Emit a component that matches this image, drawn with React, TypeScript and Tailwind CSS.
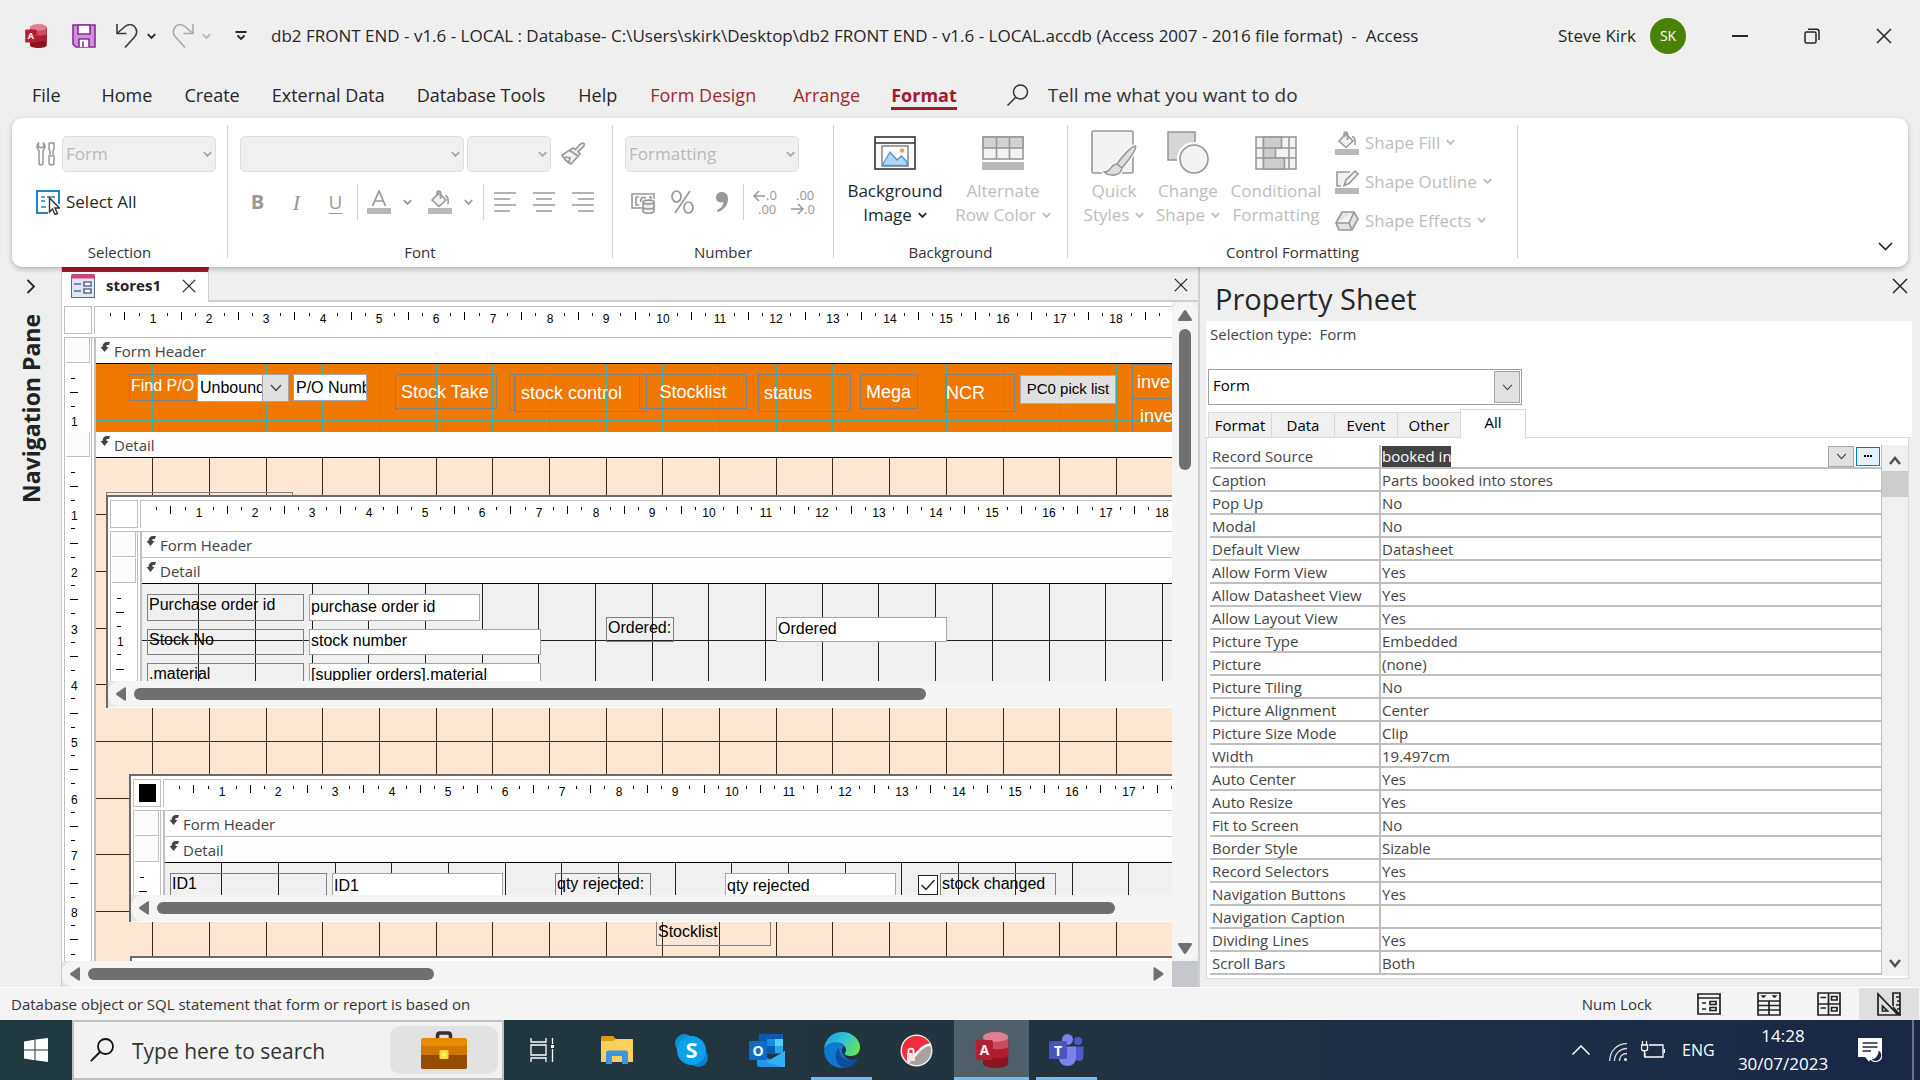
import type { ReactNode } from 'react';

const CM = 56.69;

interface ControlProps {
    id?: string;
    text: string;
    x: number;
    y: number;
    w: number;
    h: number;
}

const Chevron = ({ className = '' }: { className?: string }) => (
    <svg className={`w-[9px] h-[7px] shrink-0 ${className}`} viewBox="0 0 9 7" fill="none" stroke="currentColor" strokeWidth="1.8">
        <path d="M0.8 1.2 L4.5 5 L8.2 1.2" />
    </svg>
);

const CloseIcon = ({ className = '' }: { className?: string }) => (
    <svg className={className} viewBox="0 0 16 16" fill="none" stroke="currentColor" strokeWidth="1.5">
        <path d="M1 1 L15 15 M15 1 L1 15" />
    </svg>
);

const AccessIcon = ({ className = '' }: { className?: string }) => (
    <svg className={className} viewBox="0 0 36 40">
        <path d="M8 5 V35 C8 38 14 40 22 40 S36 38 36 35 V5 Z" fill="#8a1420" />
        <path d="M8 5 V27 C12 30 32 30 36 27 V5 Z" fill="#b01c2c" />
        <path d="M8 5 V17 C12 20 32 20 36 17 V5 Z" fill="#cb4c5c" />
        <ellipse cx="22" cy="5.5" rx="14" ry="5.5" fill="#e08090" />
        <rect x="0" y="9" width="19" height="22" rx="2" fill="#b01f32" />
        <text x="9.500" y="25.500" textAnchor="middle" fontSize="15" fontWeight="bold" fill="#fff">A</text>
    </svg>
);

const TitleBar = () => (
    <header className="h-[60px] shrink-0 flex items-center pl-6 pr-7 mt-[6px] mb-[6px] text-[17px] text-[#262626]">
        <AccessIcon className="w-6 h-6" />
        <button aria-label="Save" className="ml-6">
            <svg className="w-6 h-6" viewBox="0 0 24 24" stroke="#8a2b9c" strokeWidth="1.6">
                <path d="M1 1 H23 V23 H4 L1 20 Z" fill="#cf8fdc" />
                <path d="M6 1 H18 V10 H6 Z" fill="#fff" />
                <path d="M7 23 V15 H17 V23" fill="#fff" />
                <path d="M11 17.500 V23" fill="none" />
            </svg>
        </button>
        <button aria-label="Undo" className="ml-5 flex items-center gap-[9px]">
            <svg className="w-[22px] h-6" viewBox="0 0 22 24" fill="none" stroke="#3b3b3b" strokeWidth="1.6">
                <path d="M1 0 V9.500 H10.500 M1.500 9 L9 2.500 C12 0 16 0 18.500 2.500 C21.500 6 21.500 9.500 18.500 13 L9 23.500" />
            </svg>
            <Chevron />
        </button>
        <button aria-label="Redo" disabled className="ml-4 flex items-center gap-2 text-[#b5b5b5]">
            <svg className="w-[22px] h-6" viewBox="0 0 22 24" fill="none" stroke="#a9a9a9" strokeWidth="1.6">
                <path d="M21 0 V9.500 H11.500 M20.500 9 L13 2.500 C10 0 6 0 3.500 2.500 C0.500 6 0.500 9.500 3.500 13 L13 23.500" />
            </svg>
            <Chevron />
        </button>
        <button aria-label="Customize Quick Access Toolbar" className="ml-6">
            <svg className="w-3 h-[10px]" viewBox="0 0 12 10" fill="none" stroke="#262626" strokeWidth="1.8">
                <path d="M0.500 1 H11.500 M2.500 4.500 L6 8 L9.500 4.500" />
            </svg>
        </button>
        <h1 className="ml-6 whitespace-pre">db2 FRONT END - v1.6 - LOCAL : Database- C:\Users\skirk\Desktop\db2 FRONT END - v1.6 - LOCAL.accdb (Access 2007 - 2016 file format)  -  Access</h1>
        <div className="ml-auto flex items-center">
            <span>Steve Kirk</span>
            <span className="ml-[14px] w-9 h-9 rounded-full bg-[#498205] text-white text-sm flex items-center justify-center">SK</span>
            <button aria-label="Minimize" className="ml-[46px] w-4 h-[2px] bg-[#262626]"></button>
            <button aria-label="Restore" className="ml-14">
                <svg className="w-4 h-4" viewBox="0 0 16 16" fill="none" stroke="#262626" strokeWidth="1.5">
                    <rect x="1" y="4" width="11" height="11" rx="1.500" />
                    <path d="M4 1.200 H12.500 C14 1.200 15 2.200 15 3.700 V12" />
                </svg>
            </button>
            <button aria-label="Close" className="ml-14">
                <CloseIcon className="w-4 h-4" />
            </button>
        </div>
    </header>
);

const MenuBar = () => (
    <nav className="h-[46px] shrink-0 flex items-center pl-[17px] text-[18px] text-[#262626]">
        <a href="#file" className="px-[15px] mr-[10px]">File</a>
        {["Home", "Create", "External Data", "Database Tools"].map((item) => (
            <a href={`#${item}`} key={item} className="px-4">{item}</a>
        ))}
        <a href="#help" className="px-[17px]">Help</a>
        <a href="#design" className="pl-4 pr-5 text-[#a4262c]">Form Design</a>
        <a href="#arrange" className="px-[17px] text-[#a4262c]">Arrange</a>
        <a href="#format" className="mx-[14px] font-bold text-[#a01b2f] border-b-[3px] border-[#a01b2f] h-[30px] leading-[30px]">Format</a>
        <label htmlFor="tell" className="ml-9">
            <svg className="w-[22px] h-[22px]" viewBox="0 0 22 22" fill="none" stroke="#333" strokeWidth="1.500">
                <title>Search</title>
                <circle cx="13.500" cy="8" r="7" />
                <path d="M8.500 13.500 L0.500 21.500" />
            </svg>
        </label>
        <input id="tell" className="ml-[19px] w-72 bg-transparent text-[19px] placeholder:text-[#333] outline-none" placeholder="Tell me what you want to do" />
    </nav>
);

const Combo = ({ label, value = '', width }: { label: string; value?: string; width: string }) => (
    <div className={`relative h-9 ${width}`}>
        <select aria-label={label} disabled className="appearance-none w-full h-full rounded-[5px] border border-[#dedede] bg-[#f0f0f0] text-[#b9b9b9] text-[17px] pl-[3px] opacity-100">
            <option>{value}</option>
        </select>
        <Chevron className="absolute right-1 top-[15px] text-[#a8a8a8]" />
    </div>
);

const Group = ({ title, width, children }: { title: string; width: string; children: ReactNode }) => (
    <section className={`flex shrink-0 ${width}`}>
        <div className="flex-1 flex flex-col justify-between pb-1">
            {children}
            <h2 className="text-center text-[15px] leading-[22px] text-[#333]">{title}</h2>
        </div>
        <div className="w-px h-[133px] mt-[7px] bg-[#d0d0d0]"></div>
    </section>
);

const Divider = () => <div className="w-px h-9 bg-[#d0d0d0]"></div>;

const Align = ({ label, lines }: { label: string; lines: string }) => (
    <button disabled aria-label={label}>
        <svg className="w-[22px] h-[22px]" viewBox="0 0 22 22" stroke="#999" strokeWidth="1.600"><path d={lines} /></svg>
    </button>
);

const BucketIcon = ({ className }: { className: string }) => (
    <svg className={className} viewBox="0 0 24 24" fill="none" stroke="#999" strokeWidth="1.600">
        <path d="M4 10 L11 3 L18 10 L11 16.500 Z" fill="#f1f1f1" />
        <path d="M9 6 V2.500 C9 0.500 12.500 0.500 12.500 2.500 V9 M17 5.500 C20.500 6 20.500 10 20 14" />
        <rect x="0" y="18" width="24" height="6" fill="#b8b8b8" stroke="none" />
    </svg>
);

const Big = ({ top, bottom, icon, arrow = true, off = true, width }: { top: string; bottom: string; icon: ReactNode; arrow?: boolean; off?: boolean; width: string }) => (
    <button disabled={off} className={`flex flex-col items-center text-[17px] leading-6 ${width} ${off ? "text-[#bdbdbd]" : "text-[#262626]"}`}>
        <span className="h-[50px] flex items-center mb-px">{icon}</span>
        <span>{top}</span>
        <span className="flex items-center gap-[6px] whitespace-nowrap">{bottom}{arrow ? <Chevron /> : <></>}</span>
    </button>
);

const Ribbon = () => (
    <div className="mx-3 h-[149px] shrink-0 flex bg-white rounded-[10px] shadow-[0_2px_5px_rgba(0,0,0,0.25)] relative z-10">
        <Group title="Selection" width="w-[216px]">
            <div className="pt-[18px] pl-6">
                <div className="flex items-center gap-[6px]">
                    <svg className="w-5 h-6" viewBox="0 0 20 24" fill="none" stroke="#999" strokeWidth="1.500">
                        <path d="M2.500 1 C0.500 3 0.500 7 3 8.500 V21 C3 23.500 7 23.500 7 21 V8.500 C9.500 7 9.500 3 7.500 1 V5.500 H2.500 Z" />
                        <path d="M13 1 H18 V7 L17 9 V13 M13 1 V7 L14 9 V13 M12 14 H19 M13 15 V21 C13 23.500 18 23.500 18 21 V15" />
                    </svg>
                    <Combo label="Object" value="Form" width="w-[154px]" />
                </div>
                <button className="mt-3 h-9 flex items-center gap-[6px] text-[17px] text-[#262626]">
                    <svg className="w-6 h-[26px]" viewBox="0 0 24 26" fill="none">
                        <path d="M23 15 V2 H1 V24 H12" stroke="#1b84c9" strokeWidth="2" />
                        <path d="M5 8 H9 M11 8 H19 M5 12 H9 M5 18 H10" stroke="#1b84c9" strokeWidth="1.600" />
                        <path d="M13.500 9 V23 L16.500 20 L19 25.500 L21.500 24.500 L19 19 H23.500 Z" fill="#fff" stroke="#333" strokeWidth="1.400" />
                    </svg>
                    Select All
                </button>
            </div>
        </Group>
        <Group title="Font" width="w-[385px]">
            <div className="pt-[18px] pl-3">
                <div className="flex items-center">
                    <Combo label="Font" width="w-[224px]" />
                    <Combo label="Font size" width="w-[84px] ml-[3px]" />
                    <button disabled aria-label="Format Painter" className="ml-[10px]">
                        <svg className="w-6 h-6" viewBox="0 0 24 24" fill="none" stroke="#999" strokeWidth="1.700">
                            <path d="M22 1 C24 2 23.500 4 22 5 L17 9.500 L19 12 L10 22 C6 20 3 17 1 13 L12 6 L14.500 7.500 L19.500 2 Z M9 8.500 L17 14 M4 15 L9 16 L8 20" fill="#f3f3f3" />
                        </svg>
                    </button>
                </div>
                <div className="mt-3 h-9 flex items-center text-[#999]">
                    <button disabled aria-label="Bold" className="w-[35px] text-[20px] font-bold">B</button>
                    <button disabled aria-label="Italic" className="w-[43px] font-['Liberation_Serif'] text-[22px] italic">I</button>
                    <button disabled aria-label="Underline" className="w-[35px] text-[19px] underline underline-offset-4">U</button>
                    <div className="ml-1"><Divider /></div>
                    <button disabled aria-label="Font Color" className="ml-[9px] flex items-center gap-3">
                        <svg className="w-6 h-6" viewBox="0 0 24 24" fill="none" stroke="#999" strokeWidth="1.700">
                            <path d="M5.500 16 L12 1 L18.500 16 M8 11 H16" />
                            <rect x="0" y="18" width="24" height="6" fill="#b8b8b8" stroke="none" />
                        </svg>
                        <Chevron />
                    </button>
                    <button disabled aria-label="Background Color" className="ml-4 flex items-center gap-3">
                        <BucketIcon className="w-6 h-6" />
                        <Chevron />
                    </button>
                    <div className="ml-[10px]"><Divider /></div>
                    <div className="ml-[10px] flex gap-[17px]">
                        <Align label="Align Left" lines="M0 2 H22 M0 8 H16 M0 14 H22 M0 20 H16" />
                        <Align label="Center" lines="M0 2 H22 M3 8 H19 M0 14 H22 M3 20 H19" />
                        <Align label="Align Right" lines="M0 2 H22 M6 8 H22 M0 14 H22 M6 20 H22" />
                    </div>
                </div>
            </div>
        </Group>
        <Group title="Number" width="w-[221px]">
            <div className="pt-[18px] pl-3">
                <Combo label="Format" value="Formatting" width="w-[174px]" />
                <div className="mt-3 h-9 flex items-center text-[#999] pl-[6px]">
                    <button disabled aria-label="Currency">
                        <svg className="w-6 h-6" viewBox="0 0 24 24" fill="none" stroke="#999" strokeWidth="1.600">
                            <path d="M23 9 V4 H1 V18 H11 M8 7 H5 V15 H8 M15 8 C11 6 9 9 10 12 M18 7 H20 V9" />
                            <path d="M12 12 V21 C12 24 23 24 23 21 V12 C23 9.500 12 9.500 12 12 C12 14.500 23 14.500 23 12 M12 17 C12 19.500 23 19.500 23 17" fill="#eee" />
                        </svg>
                    </button>
                    <button disabled aria-label="Percent" className="ml-4">
                        <svg className="w-[23px] h-6" viewBox="0 0 23 24" fill="none" stroke="#999" strokeWidth="1.700">
                            <ellipse cx="5.500" cy="6.500" rx="4.500" ry="5.500" />
                            <ellipse cx="17.500" cy="17.500" rx="4.500" ry="5.500" />
                            <path d="M19 1 L4 23" />
                        </svg>
                    </button>
                    <button disabled aria-label="Comma" className="ml-[22px]">
                        <svg className="w-3 h-5" viewBox="0 0 12 20" fill="#999"><path d="M6 0 C10 0 12 3 12 7 C12 13 8 18 2 20 L1 18 C5 16 7 14 7.500 10 C3 11.500 0 9 0 5.500 C0 2 3 0 6 0 Z" /></svg>
                    </button>
                    <div className="ml-[15px]"><Divider /></div>
                    <button disabled aria-label="Increase Decimals" className="ml-[9px]">
                        <svg className="w-6 h-7 overflow-visible" viewBox="0 0 24 28" fill="none" stroke="#999" strokeWidth="1.500">
                            <path d="M12 8 H1 M6 3 L1 8 L6 13" />
                            <text x="13" y="12" fontSize="13" fill="#999" stroke="none">.0</text>
                            <text x="5" y="26" fontSize="13" fill="#999" stroke="none">.00</text>
                        </svg>
                    </button>
                    <button disabled aria-label="Decrease Decimals" className="ml-[14px]">
                        <svg className="w-6 h-7 overflow-visible" viewBox="0 0 24 28" fill="none" stroke="#999" strokeWidth="1.500">
                            <path d="M0 21 H12 M7 16 L12 21 L7 26" />
                            <text x="5" y="12" fontSize="13" fill="#999" stroke="none">.00</text>
                            <text x="13" y="26" fontSize="13" fill="#999" stroke="none">.0</text>
                        </svg>
                    </button>
                </div>
            </div>
        </Group>
        <Group title="Background" width="w-[234px]">
            <div className="pt-[10px] pl-[11px] flex">
                <Big top="Background" bottom="Image" off={false} width="w-[100px]" icon={
                    <svg className="w-[42px] h-[34px]" viewBox="0 0 42 34" fill="none">
                        <rect x="1" y="1" width="40" height="32" fill="#fafafa" stroke="#333" strokeWidth="1.600" />
                        <path d="M1 7 H41" stroke="#333" strokeWidth="1.600" />
                        <rect x="8" y="10" width="26" height="20" fill="#fff" stroke="#8a8a8a" strokeWidth="1.600" />
                        <path d="M9 28 L16 16 L23 24 L27.500 20 L33 26 V29.500 H9 Z" fill="#b3d6f2" stroke="#4a97d0" strokeWidth="1.300" />
                        <circle cx="28" cy="14.500" r="2.200" fill="#f0a050" />
                    </svg>
                } />
                <Big top="Alternate" bottom="Row Color" width="w-[116px]" icon={
                    <svg className="w-[42px] h-[34px]" viewBox="0 0 42 34" fill="none" stroke="#999" strokeWidth="1.600">
                        <rect x="1" y="1" width="40" height="22" fill="#f3f3f3" />
                        <rect x="1" y="1" width="40" height="11" fill="#d2d2d2" />
                        <path d="M14.500 1 V23 M27.500 1 V23" />
                        <rect x="0" y="26" width="42" height="8" fill="#b9b9b9" stroke="none" />
                    </svg>
                } />
            </div>
        </Group>
        <Group title="Control Formatting" width="w-[450px]">
            <div className="pt-[10px] pl-[9px] flex">
                <Big top="Quick" bottom="Styles" width="w-[74px]" icon={
                    <svg className="w-[46px] h-[46px]" viewBox="0 0 46 46" fill="none" stroke="#999" strokeWidth="1.600">
                        <rect x="1" y="1" width="41" height="42" rx="1.500" fill="#f3f3f3" />
                        <path d="M44.500 16 C41 15 30 28 26 34 L31 38 C36 32 46 20 44.500 16 Z M26 34 C19 34 21 42 13 42 C19 47 30 46 31 38" fill="#e6e6e6" stroke="#fff" strokeWidth="4" />
                        <path d="M44.500 16 C41 15 30 28 26 34 L31 38 C36 32 46 20 44.500 16 Z M26 34 C19 34 21 42 13 42 C19 47 30 46 31 38" fill="#dedede" />
                    </svg>
                } />
                <Big top="Change" bottom="Shape" width="w-[74px]" icon={
                    <svg className="w-[42px] h-[44px]" viewBox="0 0 42 44" fill="#f3f3f3" stroke="#999" strokeWidth="1.600">
                        <rect x="1" y="1" width="27" height="28" fill="#d6d6d6" />
                        <circle cx="27" cy="28" r="16" stroke="#fff" strokeWidth="2" />
                        <circle cx="27" cy="28" r="14" />
                    </svg>
                } />
                <Big top="Conditional" bottom="Formatting" arrow={false} width="w-[102px]" icon={
                    <svg className="w-[42px] h-[34px]" viewBox="0 0 42 34" fill="#f3f3f3" stroke="#999" strokeWidth="1.600">
                        <rect x="1" y="1" width="40" height="32" />
                        <path d="M8.500 1 V33 M34 1 V33 M1 12 H41 M1 22 H41" />
                        <rect x="8.500" y="1" width="18" height="11" fill="#ccc" />
                        <rect x="8.500" y="12" width="12" height="10" fill="#ccc" />
                        <rect x="8.500" y="22" width="21" height="11" fill="#ccc" />
                    </svg>
                } />
                <div className="ml-2 -mt-[5px] flex flex-col text-[17px] text-[#bdbdbd]">
                    <button disabled className="flex items-center gap-[6px] h-[39px]"><BucketIcon className="w-6 h-6" />Shape Fill<Chevron /></button>
                    <button disabled className="flex items-center gap-[6px] h-[39px]">
                        <svg className="w-6 h-6" viewBox="0 0 24 24" fill="none" stroke="#999" strokeWidth="1.600">
                            <path d="M15 2 H2 V16 H6 M9 15.500 L11 10 L20 1 L23 4 L14 13.500 Z" fill="#f0f0f0" />
                            <rect x="0" y="18" width="24" height="6" fill="#b8b8b8" stroke="none" />
                        </svg>
                        Shape Outline<Chevron />
                    </button>
                    <button disabled className="flex items-center gap-[6px] h-[39px]">
                        <svg className="w-6 h-5" viewBox="0 0 24 20" fill="#e3e3e3" stroke="#999" strokeWidth="1.700">
                            <path d="M1 12 L7 1 H19 L23 8 L17 19 H4 Z" />
                            <path d="M1 12 H14 L19 1 M14 12 L17 19" fill="#f6f6f6" />
                        </svg>
                        Shape Effects<Chevron />
                    </button>
                </div>
            </div>
        </Group>
        <button aria-label="Collapse Ribbon" className="ml-auto self-end mr-[15px] mb-4">
            <svg className="w-[15px] h-[9px]" viewBox="0 0 15 9" fill="none" stroke="#262626" strokeWidth="1.700"><path d="M1 1 L7.500 7.500 L14 1" /></svg>
        </button>
    </div>
);

// four marks to the centimetre, the fourth one carries the number
const HRuler = ({ marks }: { marks: number }) => (
    <div className="relative flex-1 h-[28px] overflow-hidden border-t border-l border-[#c0c0c0] font-['Liberation_Sans',Arial,sans-serif] text-xs text-black">
        {Array.from({ length: marks }, (_, i) => i + 1).map((q) => (
            <span key={q} className="absolute top-[4px] w-6 -ml-3 flex justify-center" style={{ left: Math.round(q * CM / 4) + 1 }}>
                {q % 4 === 0 ? <span className="leading-4">{q / 4}</span> : <span className={q % 2 === 0 ? "w-px h-2 mt-px bg-black" : "w-px h-[3px] mt-[2px] bg-black"}></span>}
            </span>
        ))}
    </div>
);

const VRuler = ({ marks }: { marks: number }) => (
    <div className="relative h-full font-['Liberation_Sans',Arial,sans-serif] text-xs text-black">
        {Array.from({ length: marks }, (_, i) => i + 1).map((q) => (
            <span key={q} className="absolute left-[5px] h-4 -mt-2 flex items-center" style={{ top: Math.floor(q * CM / 4) }}>
                {q % 4 === 0 ? <span className="leading-4 pt-1 pl-px">{q / 4}</span> : <span className={q % 2 === 0 ? "w-2 h-px bg-black" : "w-1 h-px ml-px bg-black"}></span>}
            </span>
        ))}
    </div>
);

const Grid = ({ color }: { color: string }) => (
    <svg className="absolute inset-0 w-full h-full" stroke={color} shapeRendering="crispEdges">
        {Array.from({ length: 24 }, (_, i) => Math.floor((i + 1) * CM)).map((p) => (
            <g key={p}>
                <line x1={p} x2={p} y1="0" y2="100%" />
                <line x1="0" x2="100%" y1={p} y2={p} />
            </g>
        ))}
    </svg>
);

const Section = ({ title, size, fill = "", grid = "", marks = 0, children }: { title: string; size: string; fill?: string; grid?: string; marks?: number; children?: ReactNode }) => (
    <div className={`flex flex-col min-h-0 ${size}`}>
        <div className="flex h-[26px] shrink-0">
            <div className="w-7 border-x border-[#c0c0c0] bg-white pl-px pb-px pr-px">
                <div className="h-full border-r border-b border-[#c0c0c0] bg-[#fcfcfc]"></div>
            </div>
            <div className="w-[2px] bg-white"></div>
            <div className="w-[2px] bg-[#c0c0c0]"></div>
            <div className={`flex-1 flex items-center gap-1 pl-1 bg-[#fdfdfd] border-b font-['Open_Sans','Noto_Sans',sans-serif] text-[15px] leading-5 text-[#444] ${children ? "border-black" : "border-[#c0c0c0]"}`}>
                <svg className="w-[10px] h-[10px] mb-2" viewBox="0 0 10 10" fill="#444"><path d="M10 0 L9 3 L6.500 3 V5 H8.500 L4.500 10 L0.500 5 H2.500 C2.500 2 4 0 7 0 Z" /></svg>
                {title}
            </div>
        </div>
        {children ? (
            <div className="flex flex-1 min-h-0">
                <div className="w-7 border-x border-[#c0c0c0] bg-white overflow-hidden"><VRuler marks={marks} /></div>
                <div className="w-[2px] bg-white"></div>
                <div className="w-[2px] bg-[#c0c0c0]"></div>
                <div className={`relative flex-1 overflow-hidden ${fill}`}>
                    <Grid color={grid} />
                    {children}
                </div>
            </div>
        ) : (
            <></>
        )}
    </div>
);

const Surface = ({ marks, selected = false, children }: { marks: number; selected?: boolean; children: ReactNode }) => (
    <div className="flex-1 min-h-0 flex flex-col bg-white">
        <div className="flex h-[31px] shrink-0">
            <button aria-label="Select form" className="w-7 h-7 mr-[2px] border border-[#c0c0c0] flex items-center justify-center">
                {selected ? <span className="w-[17px] h-[18px] bg-black"></span> : <></>}
            </button>
            <HRuler marks={marks} />
        </div>
        <div className="h-px shrink-0 bg-[#c0c0c0]"></div>
        {children}
    </div>
);

const HScroll = ({ thumb, end = false }: { thumb: string; end?: boolean }) => (
    <div className="h-[26px] shrink-0 flex items-center bg-[#f5f5f5] rounded-l-[12px] pl-2 pr-2">
        <svg className="w-[10px] h-[14px] shrink-0" viewBox="0 0 10 14" fill="#707070"><path d="M8.500 0.500 C9.500 0 10 0.500 10 1.500 V12.500 C10 13.500 9.500 14 8.500 13.500 L0.500 8 C0 7.500 0 6.500 0.500 6 Z" /></svg>
        <div className={`ml-2 h-3 rounded-full bg-[#707070] shrink-0 ${thumb}`}></div>
        {end ? (
            <svg className="ml-auto w-[11px] h-[14px]" viewBox="0 0 10 14" fill="#707070"><path d="M1.500 0.500 C0.500 0 0 0.500 0 1.500 V12.500 C0 13.500 0.500 14 1.500 13.500 L9.500 8 C10 7.500 10 6.500 9.500 6 Z" /></svg>
        ) : (
            <></>
        )}
    </div>
);

const FieldLabel = ({ id, text, x, y, w, h }: ControlProps) => (
    <label htmlFor={id} className="absolute border border-[#808080] pl-px text-base leading-5 text-black whitespace-nowrap" style={{ left: x, top: y, width: w, height: h }}>{text}</label>
);

const TextBox = ({ id, text, x, y, w, h }: ControlProps) => (
    <input id={id} aria-label={text} defaultValue={text} className="absolute border border-[#a6a6a6] bg-white pl-px pb-[2px] text-base text-black" style={{ left: x, top: y, width: w, height: h }} />
);

const HeaderLabel = ({ text, x, y, w, h }: ControlProps) => (
    <a href={`#${text}`} className="absolute border border-[#808080] pl-[5px] flex items-center text-lg text-white whitespace-nowrap" style={{ left: x, top: y, width: w, height: h }}>{text}</a>
);

const headerLabels = [
    { text: "Stock Take", x: 299, y: 10, w: 102, h: 35 },
    { text: "stock control", x: 419, y: 10, w: 132, h: 38 },
    { text: "Mega", x: 764, y: 10, w: 58, h: 35 },
    { text: "status", x: 662, y: 10, w: 93, h: 38 },
];

const orderLabels = [
    { id: "po", text: "Purchase order id", x: 5, y: 10, w: 157, h: 27 },
    { id: "stock", text: "Stock No", x: 5, y: 45, w: 157, h: 26 },
    { id: "material", text: ".material", x: 5, y: 79, w: 157, h: 26 },
    { id: "ordered", text: "Ordered:", x: 464, y: 33, w: 68, h: 25 },
];

const orderBoxes = [
    { id: "po", text: "purchase order id", x: 167, y: 10, w: 171, h: 27 },
    { id: "stock", text: "stock number", x: 167, y: 45, w: 232, h: 26 },
    { id: "material", text: "[supplier orders].material", x: 167, y: 79, w: 232, h: 26 },
    { id: "ordered", text: "Ordered", x: 634, y: 33, w: 171, h: 25 },
];

const Subform = ({ place, selected, thumb, across, down, children }: { place: string; selected?: boolean; thumb: string; across: number; down: number; children: ReactNode }) => (
    <div className={`absolute right-0 flex flex-col bg-white border-l-2 border-t-2 border-[#6b6b6b] ${place}`}>
        <div className="flex-1 min-h-0 flex flex-col pl-[2px] pt-[3px]">
            <Surface marks={across} selected={selected}>
                <Section title="Form Header" size="shrink-0" />
                <Section title="Detail" size="flex-1" fill="bg-[#f0f0f0]" grid="#222" marks={down}>{children}</Section>
            </Surface>
        </div>
        <div className="bg-[#e6e6e6]"><HScroll thumb={thumb} /></div>
        <div className="h-px bg-white"></div>
    </div>
);

const Designer = () => (
    <main className="flex-1 min-w-0 flex flex-col border-l border-[#cfcfcf]">
        <div className="h-[35px] shrink-0 flex">
            <div className="w-[147px] flex items-center bg-white border-t-[5px] border-r border-t-[#a4172b] border-r-[#cfcfcf] pl-[9px] pb-[3px]">
                <svg className="w-6 h-6" viewBox="0 0 24 24" fill="none">
                    <rect x="0.500" y="2" width="23" height="21.500" fill="#dfe7f5" stroke="#5a6b8c" />
                    <rect x="0.500" y="0" width="23" height="4.500" fill="#c9457f" />
                    <path d="M3 10 H10 M3 17 H10" stroke="#5a6b8c" strokeWidth="1.600" />
                    <path d="M13 8 H20 V12 H13 Z M13 15 H20 V19 H13 Z" fill="#fff" stroke="#5a6b8c" strokeWidth="1.600" />
                </svg>
                <span className="ml-[11px] text-[15px] font-bold text-[#222]">stores1</span>
                <button aria-label="Close stores1" className="ml-auto mr-3 text-[#262626]"><CloseIcon className="w-[14px] h-[14px]" /></button>
            </div>
            <div className="flex-1 flex items-center justify-end border-b-2 border-[#cfcfcf] pr-[10px]">
                <button aria-label="Close document" className="text-[#262626] mt-[2px]"><CloseIcon className="w-[14px] h-[14px]" /></button>
            </div>
        </div>
        <div className="flex-1 min-h-0 flex">
            <div className="flex-1 min-w-0 flex flex-col font-['Liberation_Sans',Arial,sans-serif]">
                <div className="flex-1 min-h-0 flex flex-col pl-[2px] pt-1 bg-white">
                    <Surface marks={75}>
                        <Section title="Form Header" size="h-[94px] shrink-0" fill="bg-[#f07800]" grid="#38b0a0" marks={4}>
                            <label htmlFor="find" className="absolute left-[33px] top-[10px] w-[69px] h-[27px] border border-[#808080] pl-px text-base leading-[22px] text-white">Find P/O</label>
                            <div className="absolute left-[101px] top-[10px] w-[92px] h-7">
                                <select id="find" className="appearance-none w-full h-full border border-[#a6a6a6] bg-white pl-[2px] text-base text-black">
                                    <option>Unbound</option>
                                </select>
                                <span className="absolute right-px top-px bottom-px w-[26px] bg-[#e0e0e0] border-l border-[#a6a6a6] flex items-center justify-center text-[#444]">
                                    <svg className="w-3 h-2" viewBox="0 0 12 8" fill="none" stroke="currentColor" strokeWidth="1.200"><path d="M1 1 L6 6.500 L11 1" /></svg>
                                </span>
                            </div>
                            <input aria-label="P/O Number" defaultValue="P/O Number" className="absolute left-[197px] top-[10px] w-[74px] h-[27px] border border-[#a6a6a6] bg-white pl-[2px] text-base text-black" />
                            <div className="absolute left-[413px] top-[10px] w-[6px] h-[37px] border border-[#808080]"></div>
                            {headerLabels.map((c) => <HeaderLabel key={c.text} {...c} />)}
                            <a href="#stocklist" className="absolute left-[543px] top-[10px] w-[108px] h-[35px] border border-[#808080] flex items-center justify-center text-lg text-white">Stocklist</a>
                            <a href="#ncr" className="absolute left-[849px] top-[10px] w-[70px] h-[38px] border border-[#808080] flex items-center text-lg text-white">NCR</a>
                            <button className="absolute left-[924px] top-[11px] w-[96px] h-[29px] border border-[#b0b0b0] bg-[#e0e0e0] text-[15px] text-black whitespace-nowrap">PC0 pick list</button>
                            <a href="#inve-top" className="absolute left-[1036px] right-0 top-0 h-[35px] border border-r-0 border-[#808080] bg-[#f07800] pl-1 flex items-center text-lg text-white">inve</a>
                            <a href="#inve-bottom" className="absolute left-[1036px] right-0 top-[35px] h-[33px] border-l border-[#808080] pl-[7px] flex items-center text-lg text-white">inve</a>
                        </Section>
                        <Section title="Detail" size="flex-1" fill="bg-[#fce6d4]" grid="#3a2a1c" marks={35}>
                            <div className="absolute left-[10px] top-[34px] w-[187px] h-6 border border-[#808080]"></div>
                            <Subform place="left-[10px] top-[37px] h-[213px]" thumb="w-[792px]" across={72} down={6}>
                                {orderLabels.map((c) => <FieldLabel key={c.text} {...c} />)}
                                {orderBoxes.map((c) => <TextBox key={c.text} {...c} />)}
                            </Subform>
                            <Subform place="left-[33px] top-[316px] h-[148px]" selected thumb="w-[958px]" across={71} down={2}>
                                <FieldLabel id="id1" text="ID1" x={5} y={10} w={157} h={27} />
                                <TextBox id="id1" text="ID1" x={167} y={10} w={171} h={27} />
                                <FieldLabel id="qty" text="qty rejected:" x={390} y={10} w={96} h={27} />
                                <TextBox id="qty" text="qty rejected" x={560} y={10} w={171} h={27} />
                                <input id="changed" type="checkbox" defaultChecked className="absolute left-[753px] top-[12px] w-5 h-5 appearance-none border border-[#222] bg-white" />
                                <svg className="absolute left-[756px] top-[16px] w-[14px] h-3 pointer-events-none" viewBox="0 0 14 12" fill="none" stroke="#222" strokeWidth="1.500"><path d="M0.500 6 L5 10.500 L13.500 1" /></svg>
                                <FieldLabel id="changed" text="stock changed" x={775} y={10} w={116} h={27} />
                            </Subform>
                            <div className="absolute left-[560px] top-[464px] w-[115px] h-6 border border-t-0 border-[#808080] pl-px text-base leading-5 text-black">Stocklist</div>
                            <div className="absolute left-[34px] right-0 top-[498px] h-10 border-l-2 border-t-2 border-[#6b6b6b] bg-white pl-[2px] pt-[3px]">
                                <div className="h-full border border-[#c0c0c0]"></div>
                            </div>
                        </Section>
                    </Surface>
                </div>
                <div className="bg-[#e6e6e6]"><HScroll thumb="w-[346px]" end /></div>
            </div>
            <div className="w-[26px] shrink-0 flex flex-col">
                <div className="flex-1 bg-[#f5f5f5] rounded-[12px] flex flex-col items-center pt-2 pb-[7px]">
                    <svg className="w-[14px] h-[11px]" viewBox="0 0 14 11" fill="#707070"><path d="M6 0.500 C6.500 0 7.500 0 8 0.500 L13.700 9 C14.200 10 14 11 12.500 11 H1.500 C0 11 -0.200 10 0.300 9 Z" /></svg>
                    <div className="mt-2 w-3 h-[141px] rounded-full bg-[#707070]"></div>
                    <svg className="mt-auto w-[14px] h-[11px] rotate-180" viewBox="0 0 14 11" fill="#707070"><path d="M6 0.500 C6.500 0 7.500 0 8 0.500 L13.700 9 C14.200 10 14 11 12.500 11 H1.500 C0 11 -0.200 10 0.300 9 Z" /></svg>
                </div>
                <div className="h-[26px] bg-[#c5c7cc]"></div>
            </div>
        </div>
    </main>
);

const properties = [
    ["Caption", "Parts booked into stores"],
    ["Pop Up", "No"],
    ["Modal", "No"],
    ["Default View", "Datasheet"],
    ["Allow Form View", "Yes"],
    ["Allow Datasheet View", "Yes"],
    ["Allow Layout View", "Yes"],
    ["Picture Type", "Embedded"],
    ["Picture", "(none)"],
    ["Picture Tiling", "No"],
    ["Picture Alignment", "Center"],
    ["Picture Size Mode", "Clip"],
    ["Width", "19.497cm"],
    ["Auto Center", "Yes"],
    ["Auto Resize", "Yes"],
    ["Fit to Screen", "No"],
    ["Border Style", "Sizable"],
    ["Record Selectors", "Yes"],
    ["Navigation Buttons", "Yes"],
    ["Navigation Caption", ""],
    ["Dividing Lines", "Yes"],
    ["Scroll Bars", "Both"],
];

const PropertySheet = () => (
    <aside className="w-[722px] shrink-0 border-l-2 border-[#cfcfcf] flex flex-col pl-[6px] pr-2 pb-2">
        <div className="h-[54px] shrink-0 flex items-start justify-between pl-[9px] pr-1">
            <h2 className="text-[29px] leading-[64px] text-[#262626]">Property Sheet</h2>
            <button aria-label="Close Property Sheet" className="mt-[11px] text-[#262626]"><CloseIcon className="w-4 h-4" /></button>
        </div>
        <div className="bg-white shrink-0 text-[15px] text-[#444]">
            <p className="pl-1 pt-[2px] h-12 leading-[22px] whitespace-pre">Selection type:  Form</p>
            <div className="relative ml-[2px] w-[314px] h-9">
                <select aria-label="Object" className="appearance-none w-full h-full border border-[#a0a0a0] pl-1 pb-1 text-black">
                    <option>Form</option>
                </select>
                <span className="absolute right-[2px] top-[2px] bottom-[2px] w-[26px] border border-[#a6a6a6] bg-[#e1e1e1] flex items-center justify-center">
                    <svg className="w-[11px] h-[7px]" viewBox="0 0 12 8" fill="none" stroke="#444" strokeWidth="1.200"><path d="M1 1 L6 6.500 L11 1" /></svg>
                </span>
            </div>
            <div className="relative z-10 flex items-end mt-1 ml-[2px] -mb-px text-black">
                {["Format", "Data", "Event", "Other"].map((tab) => (
                    <button key={tab} className="w-[63px] h-[26px] bg-[#f0f0f0] border border-r-0 border-[#d9d9d9]">{tab}</button>
                ))}
                <button className="w-[66px] h-[29px] pb-1 bg-white border border-b-0 border-[#d9d9d9]">All</button>
            </div>
        </div>
        <div className="flex-1 min-h-0 mr-[3px] flex bg-white border border-[#d9d9d9] pt-[7px] pb-[2px] pl-[3px]">
            <div className="flex-1 min-w-0">
                <table className="w-full border-collapse text-[15px] leading-5 text-[#444] border-r border-[#bfbfbf]">
                    <tbody>
                        <tr className="h-[23px] border-b-2 border-[#bfbfbf]">
                            <th className="w-[170px] p-0 pl-[2px] text-left font-normal border-r-2 border-[#bfbfbf]"><label htmlFor="source">Record Source</label></th>
                            <td className="p-0 pl-px">
                                <div className="flex items-center h-[21px]">
                                    <input id="source" defaultValue="booked in" className="w-[69px] h-[21px] bg-[#444] text-white" />
                                    <button aria-label="Show record sources" className="ml-auto w-[26px] h-[21px] border border-[#a6a6a6] bg-[#e1e1e1] flex items-center justify-center">
                                        <svg className="w-[11px] h-[7px]" viewBox="0 0 12 8" fill="none" stroke="#444" strokeWidth="1.200"><path d="M1 1 L6 6.500 L11 1" /></svg>
                                    </button>
                                    <button aria-label="Build" className="ml-[2px] mr-px w-6 h-[19px] border border-[#0078d7] bg-[#e5f1fb] flex items-center justify-center gap-px">
                                        <span className="w-[2px] h-[2px] bg-black"></span>
                                        <span className="w-[2px] h-[2px] bg-black"></span>
                                        <span className="w-[2px] h-[2px] bg-black"></span>
                                    </button>
                                </div>
                            </td>
                        </tr>
                        {properties.map(([name, value]) => (
                            <tr key={name} className="h-[23px] border-b-2 border-[#bfbfbf]">
                                <th className="p-0 pl-[2px] text-left font-normal border-r-2 border-[#bfbfbf]">{name}</th>
                                <td className="p-0 pl-px">{value}</td>
                            </tr>
                        ))}
                    </tbody>
                </table>
            </div>
            <div className="w-[26px] shrink-0 bg-[#f0f0f0] flex flex-col items-center pt-[11px] pb-2">
                <svg className="w-3 h-[9px]" viewBox="0 0 12 9" fill="none" stroke="#505050" strokeWidth="2.500"><path d="M1 8 L6 2 L11 8" /></svg>
                <div className="mt-[6px] w-full h-[26px] bg-[#cdcdcd]"></div>
                <svg className="mt-auto w-3 h-[9px]" viewBox="0 0 12 9" fill="none" stroke="#505050" strokeWidth="2.500"><path d="M1 1 L6 7 L11 1" /></svg>
            </div>
        </div>
    </aside>
);

const ViewButton = ({ label, active = false, children }: { label: string; active?: boolean; children: ReactNode }) => (
    <button aria-label={label} className={`w-[60px] h-full flex items-center justify-center ${active ? "bg-[#dfdfdf]" : ""}`}>
        <svg className="w-6 h-6" viewBox="0 0 24 24" fill="none" stroke="#222" strokeWidth="1.700">{children}</svg>
    </button>
);

const StatusBar = () => (
    <footer className="h-[33px] shrink-0 flex items-center bg-[#f4f4f4] border-t border-white pl-[11px] pr-px text-[15px] text-[#333]">
        <span>Database object or SQL statement that form or report is based on</span>
        <span className="ml-auto mr-[27px]">Num Lock</span>
        <ViewButton label="Form View"><path d="M1 2 H23 V22 H1 Z M1 6 H23 M5 11 H9 M5 17 H9 M13 9.500 H19 V12.500 H13 Z M13 15.500 H19 V18.500 H13 Z" /></ViewButton>
        <ViewButton label="Datasheet View"><path d="M1 1 H23 V23 H1 Z M1 9 H23 M1 13.500 H23 M1 18 H23 M12 9 V23" /><path d="M4 3.500 H9 L6.500 6 Z M15 3.500 H20 L17.500 6 Z" fill="#222" strokeWidth="0.500" /></ViewButton>
        <ViewButton label="Layout View"><path d="M1 1 H23 V23 H1 Z M11.500 1 V23 M1 12 H23 M3.500 5.500 H9 M3.500 16 H9 M14.500 4.500 H20 V8 H14.500 Z M14.500 15.500 H20 V19 H14.500 Z" /></ViewButton>
        <ViewButton label="Design View" active><path d="M1 2 V23 H21 Z M5.500 14 V19 H10.500 Z M16 14 V1 H23 V23 L16 15 M19 5 H23 M20 9 H23 M19 13 H23 M20 17 H23" /></ViewButton>
    </footer>
);

const TaskButton = ({ label, state = "", children }: { label: string; state?: string; children: ReactNode }) => (
    <button aria-label={label} className={`w-[75px] h-full flex flex-col items-center justify-between ${state === "active" ? "bg-[#50606a]" : ""}`}>
        <span className="h-[57px] pt-[3px] flex items-center">{children}</span>
        <span className={`h-[3px] ${state === "active" ? "w-full bg-[#76b9ed]" : state === "open" ? "w-[61px] bg-[#76b9ed]" : ""}`}></span>
    </button>
);

const Taskbar = () => (
    <footer className="h-[60px] shrink-0 flex items-center bg-linear-to-r from-[#203a40] via-[#22343f] to-[#1a2748] text-white">
        <button aria-label="Start" className="w-[72px] flex justify-center">
            <svg className="w-6 h-6" viewBox="0 0 24 24" fill="#fff"><path d="M0 3.500 L10.500 1.800 V11.400 H0 Z M11.500 1.600 L24 0 V11.400 H11.500 Z M0 12.500 H10.500 V22.200 L0 20.600 Z M11.500 12.500 H24 V24 L11.500 22.300 Z" /></svg>
        </button>
        <div className="w-[432px] h-full flex items-center bg-[#f2f2f2] border-2 border-[#c0c0c0] pl-4 pr-1">
            <label htmlFor="search">
                <svg className="w-6 h-6" viewBox="0 0 24 24" fill="none" stroke="#111" strokeWidth="1.800"><title>Search</title><circle cx="15.500" cy="8.500" r="7.500" /><path d="M10 14 L0.800 23.200" /></svg>
            </label>
            <input id="search" placeholder="Type here to search" className="ml-[18px] pt-1 w-[240px] bg-transparent text-[21px] placeholder:text-[#333]" />
            <div className="ml-auto w-[108px] h-12 rounded-[10px] bg-[#e2e2e2] flex items-center justify-center">
                <svg className="w-[46px] h-[38px]" viewBox="0 0 46 38">
                    <path d="M16.500 8 V4.500 C16.500 2.500 17.500 2 19 2 H27 C28.500 2 29.500 2.500 29.500 4.500 V8" fill="none" stroke="#333" strokeWidth="3.500" />
                    <rect x="0" y="7" width="46" height="31" rx="2" fill="#e98b00" />
                    <path d="M0 15 H46 V24 H0 Z" fill="#cf7700" />
                    <path d="M0 24 H46 V36 C46 37.500 45 38 44 38 H2 C1 38 0 37.500 0 36 Z" fill="#954c00" />
                    <rect x="18.500" y="19" width="9" height="9" rx="1" fill="#ffd92e" />
                    <rect x="21" y="21.500" width="4" height="4" fill="#fff27a" />
                </svg>
            </div>
        </div>
        <TaskButton label="Task View">
            <svg className="w-6 h-6" viewBox="0 0 24 24" fill="none" stroke="#fff" strokeWidth="1.300"><path d="M1 0 V4 H16 V0 M1 7 H16 V17 H1 Z M1 24 V20 H16 V24 M22.500 0 V6 M22.500 11 V24" /><rect x="21" y="7" width="3" height="3" fill="#fff" stroke="none" /></svg>
        </TaskButton>
        <TaskButton label="File Explorer">
            <svg className="w-8 h-7" viewBox="0 0 32 28"><path d="M0 1.500 C0 0.500 0.500 0 1.500 0 H12 L15 3 V6 H0 Z" fill="#dd9b08" /><path d="M0 5 H12 L15 3 H31 C32 3 32 3.500 32 4 V26 H0 Z" fill="#fdd05b" /><path d="M5 28 V17 C5 15.500 6 14.500 7.500 14.500 H24.500 C26 14.500 27 15.500 27 17 V28 H21 V20 H11 V28 Z" fill="#3b96dd" /></svg>
        </TaskButton>
        <TaskButton label="Skype">
            <svg className="w-[33px] h-[33px]" viewBox="0 0 33 33"><circle cx="9.500" cy="9.500" r="9.500" fill="#0e8fd0" /><circle cx="23.500" cy="23.500" r="9.500" fill="#0f7fd4" /><circle cx="16.500" cy="16.500" r="14.500" fill="#0aa2ea" /><text x="16.500" y="24" textAnchor="middle" fontSize="22" fontWeight="bold" fill="#fff">S</text></svg>
        </TaskButton>
        <TaskButton label="Outlook">
            <svg className="w-9 h-[33px]" viewBox="0 0 36 33"><rect x="10" y="0" width="24" height="20" fill="#0a5ab0" /><path d="M18 5 H26 V12 H18 Z" fill="#1a8ae0" /><path d="M26 5 H34 V12 H26 Z" fill="#50d0ff" /><path d="M26 12 H34 V19 H26 Z" fill="#28a8ea" /><path d="M8 18 L22 26 L36 17 V31 C36 32 35 33 34 33 H10 C9 33 8 32 8 31 Z" fill="#2596e6" /><path d="M36 17 L17 28 L34 33 H36 Z" fill="#35b0f2" /><rect x="0" y="7" width="18" height="19" rx="1.500" fill="#0f6cc4" /><text x="9" y="22" textAnchor="middle" fontSize="14" fontWeight="bold" fill="#fff">O</text></svg>
        </TaskButton>
        <TaskButton label="Edge" state="open">
            <svg className="w-9 h-9" viewBox="0 0 36 36">
                <defs>
                    <linearGradient id="edgeTop" x1="0" x2="1" y1="0.200" y2="0.600"><stop offset="0" stopColor="#1f9fe0" /><stop offset="0.550" stopColor="#35c4d0" /><stop offset="1" stopColor="#66e356" /></linearGradient>
                </defs>
                <path d="M0 18 C0 28 8 36 18 36 C25 36 31 32 33 27 C28 30 21 27 19 22 C17 19 18 16 20 14 C14 8 3 9 0 18 Z" fill="#0f78d0" />
                <path d="M0 17 C1 7 8 0 18 0 C29 0 36 8 36 15 C36 21 32 24 27 24 C23 24 20 23 21 21 C22 19 22.500 18 21.500 15.500 C20 12 15 10 10 10.500 C5 11 2 13.500 0 17 Z" fill="url(#edgeTop)" />
                <path d="M15 16 C10 21 10 31 19 35.900 C25 36 30 33 33 28 C33.500 27 33 26.500 32 27 C23 31 15 25 15 16 Z" fill="#0d4f9e" />
            </svg>
        </TaskButton>
        <TaskButton label="VPN client">
            <svg className="w-[33px] h-[33px]" viewBox="0 0 33 33"><circle cx="16.500" cy="16.500" r="16" fill="#eee" /><circle cx="16.500" cy="16.500" r="14.500" fill="#a9a09f" /><path d="M2 18 C1.500 8 9 2 16.500 2 C23 2 28.500 6 30 10 C20 11 16 23 8 28 C5 25 2.500 22 2 18 Z" fill="#f22c3d" /><path d="M30.500 10.500 C20 11 16 23 8 28" fill="none" stroke="#fff" strokeWidth="2.500" /><path d="M7 19 H15 V27 H7 Z" fill="#ffe3e3" /><path d="M8.500 19 V16.500 C8.500 14 13.500 14 13.500 16.500 V19" fill="none" stroke="#fff" strokeWidth="1.800" /></svg>
        </TaskButton>
        <TaskButton label="Access" state="active"><AccessIcon className="w-9 h-9" /></TaskButton>
        <TaskButton label="Teams" state="open">
            <svg className="w-9 h-8" viewBox="0 0 36 32"><circle cx="29" cy="7" r="4" fill="#5059c9" /><path d="M24 12.500 H34.500 V23 C34.500 27 30 28 27 26 Z" fill="#5059c9" /><circle cx="18.500" cy="5.500" r="5.500" fill="#7b83eb" /><path d="M10 12.500 H27 V24 C27 29 23 32 18.500 32 S10 29 10 24 Z" fill="#7b83eb" /><rect x="0" y="7" width="18" height="18" rx="1.500" fill="#4b53bc" /><text x="9" y="21.500" textAnchor="middle" fontSize="14" fontWeight="bold" fill="#fff">T</text></svg>
        </TaskButton>
        <div className="ml-auto flex items-center h-full text-[17px]">
            <button aria-label="Show hidden icons"><svg className="w-[18px] h-[10px]" viewBox="0 0 18 10" fill="none" stroke="#fff" strokeWidth="1.500"><path d="M0.500 9.500 L9 1 L17.500 9.500" /></svg></button>
            <svg className="ml-[19px] mt-1 w-[18px] h-[18px]" viewBox="0 0 18 18" fill="none" stroke="#ddd" strokeWidth="1.300"><path d="M0.700 18 C0.700 8 8 0.700 18 0.700 M5.500 18 C5.500 11 11 5.500 18 5.500 M10.500 18 C10.500 13.500 13.500 10.500 18 10.500" /><circle cx="16.500" cy="16.500" r="1.500" fill="#fff" stroke="none" /></svg>
            <svg className="ml-[14px] w-6 h-[18px]" viewBox="0 0 24 18" fill="none" stroke="#fff" strokeWidth="1.300"><path d="M8 4 H22 V16 H4 V12 M23.500 8 V12 M1.500 0 V4 M5.500 0 V4 M0.500 4 H6.500 V8 C6.500 10.500 0.500 10.500 0.500 8 Z M3.500 10 V16" /></svg>
            <span className="ml-[17px] w-[34px] text-base">ENG</span>
            <div className="ml-5 w-[94px] text-center leading-7 whitespace-nowrap">
                <p>14:28</p>
                <p>30/07/2023</p>
            </div>
            <button aria-label="Notifications" className="ml-[28px]">
                <svg className="w-6 h-6" viewBox="0 0 24 24"><path d="M0 0 H24 V19 H15 L11 23.500 L7 19 H0 Z" fill="#fff" /><path d="M4.500 5 H19.500 M4.500 9 H19.500 M4.500 13 H13" stroke="#1b2947" strokeWidth="1.300" /><path d="M20 11.500 C25 14 25 20 21 22.500 C18 24.500 14 23.500 12.500 20.500 C17 21 20.500 17 20 11.500 Z" fill="#1b2947" stroke="#fff" strokeWidth="1.200" /></svg>
            </button>
            <div className="ml-[30px] w-[2px] h-full bg-[#6a7489]"></div>
            <div className="w-[6px]"></div>
        </div>
    </footer>
);

const App = () => {
    return (
        <div className="h-screen flex flex-col overflow-hidden bg-[#efefef] font-['Open_Sans','Noto_Sans',sans-serif]">
            <TitleBar />
            <MenuBar />
            <Ribbon />
            <div className="flex-1 min-h-0 flex">
                <aside className="w-[61px] shrink-0 flex flex-col items-center pt-3">
                    <button aria-label="Open Navigation Pane">
                        <svg className="w-[10px] h-[15px]" viewBox="0 0 10 15" fill="none" stroke="#262626" strokeWidth="1.800"><path d="M1.500 1 L8 7.500 L1.500 14" /></svg>
                    </button>
                    <span className="mt-5 text-[23px] leading-8 font-bold text-[#222] [writing-mode:vertical-rl] rotate-180">Navigation Pane</span>
                </aside>
                <Designer />
                <PropertySheet />
            </div>
            <StatusBar />
            <Taskbar />
        </div>
    );
};

export default App;
